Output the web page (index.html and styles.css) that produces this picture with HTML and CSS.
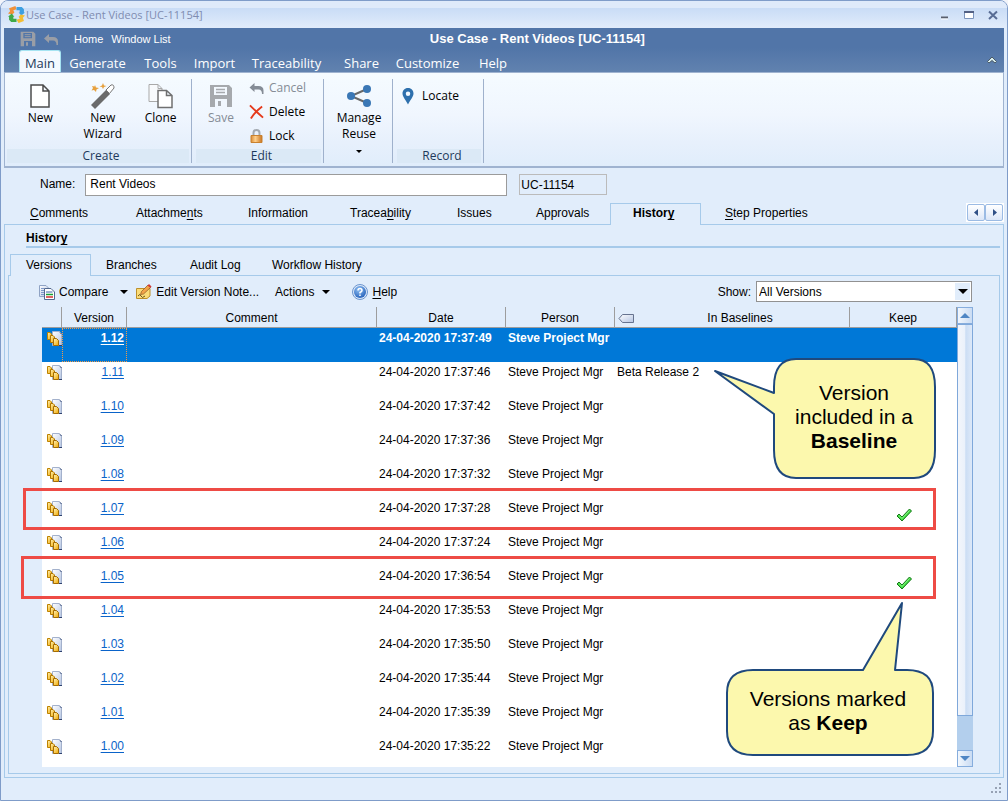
FILE: index.html
```html
<!DOCTYPE html>
<html lang="en">
<head>
<meta charset="utf-8">
<title>Use Case - Rent Videos [UC-11154]</title>
<link rel="stylesheet" href="styles.css">
</head>
<body>
<svg class="sprite" aria-hidden="true">
  <defs>
    <linearGradient id="gold" x1="0" y1="0" x2="1" y2="1"><stop offset="0" stop-color="#fff3b8"/><stop offset="1" stop-color="#f2a900"/></linearGradient>
    <linearGradient id="paper" x1="0" y1="0" x2="1" y2="1"><stop offset="0" stop-color="#fff"/><stop offset="1" stop-color="#b4c4e2"/></linearGradient>
    <linearGradient id="brass" x1="0" y1="0" x2="1" y2="0"><stop offset="0" stop-color="#d98a35"/><stop offset=".4" stop-color="#ffcf8a"/><stop offset="1" stop-color="#c87420"/></linearGradient>
    <radialGradient id="ball" cx=".4" cy=".3" r=".8"><stop offset="0" stop-color="#8fc0f4"/><stop offset="1" stop-color="#1c58b4"/></radialGradient>
    <symbol id="copies" viewBox="0 0 16 16">
      <path d="M5.500 .5H12.500L14.500 2.500V14.500H5.500z" fill="url(#paper)" stroke="#a3b1cc"/>
      <path d="M13 1.500L14.500 3M12 14.500H15" fill="none" stroke="#2f426f"/>
      <path d="M.5 1.500H3L4.500 3V8.500H.5z" fill="url(#gold)" stroke="#bd8200"/>
      <path d="M3.500 4.500H6L7.500 6V11.500H3.500z" fill="url(#gold)" stroke="#b07600"/>
      <path d="M6.500 7.500H9.500L11.500 9.500V14.500H6.500z" fill="url(#gold)" stroke="#a66c00"/>
    </symbol>
    <symbol id="tick" viewBox="0 0 16 14">
      <path d="M1 8L3 6L6 9L13.500 1L15.500 3L6 13z" fill="#3fdc3f" stroke="#17791a" stroke-width="1"/>
      <path d="M3 7.500L6 10.500L13.500 2.500" fill="none" stroke="#8cf58a"/>
    </symbol>
    <symbol id="floppy" viewBox="0 0 24 24">
      <path fill-rule="evenodd" fill="currentColor" d="M1 1H20L23 4V23H1zM5 3V11H18V3zM6 15V23H18V15zM9 17H12V22H9z"/>
      <path d="M7 5.500H16M7 8.500H16" stroke="currentColor" stroke-width="1.500"/>
    </symbol>
    <symbol id="undo" viewBox="0 0 14 11">
      <path fill="currentColor" d="M0 4.500L5 0V3H9Q14 3 14 7.500V11H12.500Q12.500 6.500 9 6.500H5V9z"/>
    </symbol>
    <symbol id="down" viewBox="0 0 8 4"><path d="M0 0H8L4 4z" fill="currentColor"/></symbol>
  </defs>
</svg>

<div class="window">
  <header class="titlebar">
    <svg class="logo" viewBox="0 0 16 16" aria-hidden="true">
      <path d="M0 7L2 5L1 2L7 0L8 3L5 4L6 6L4 8z" fill="#f09038"/>
      <path d="M8 1L13 1L15 3V6H16L12.500 9L10 6H11V4H8z" fill="#3d9fe0"/>
      <path d="M16 9L14 11L15 14L10 16L8 13L11 12L10 10L12 8z" fill="#f4bd32"/>
      <path d="M8 15L3 15L1 13V10H0L3.500 7L6 10H5V12H8z" fill="#3faa48"/>
    </svg>
    <span class="title">Use Case - Rent Videos [UC-11154]</span>
    <div class="win-buttons">
      <button aria-label="Minimize"><svg viewBox="0 0 10 10"><path d="M1 7.500H8" stroke="#595f6d" stroke-width="2"/><path d="M1 9H8" stroke="#fff"/></svg></button>
      <button aria-label="Maximize"><svg viewBox="0 0 10 10"><path d="M.5 2.500H9.500V8.500H.5z" fill="#fff" stroke="#7c95bd"/><path d="M0 2H10" stroke="#536184" stroke-width="2"/></svg></button>
      <button aria-label="Close"><svg viewBox="0 0 10 10"><path d="M1 1.500L9 9M9 1.500L1 9" stroke="#586c94" stroke-width="2"/></svg></button>
    </div>
  </header>

  <div class="appbar">
    <div class="quick">
      <button aria-label="Save" class="gray"><svg width="16" height="16"><use href="#floppy"/></svg></button>
      <button aria-label="Undo" class="gray"><svg width="14" height="11"><use href="#undo"/></svg></button>
      <a href="#">Home</a>
      <a href="#">Window List</a>
      <h1>Use Case - Rent Videos [UC-11154]</h1>
    </div>
    <nav class="menu">
      <button class="active">Main</button><button>Generate</button><button>Tools</button><button>Import</button><button>Traceability</button><button>Share</button><button>Customize</button><button>Help</button>
      <button class="collapse" aria-label="Collapse ribbon"><svg width="10" height="8" viewBox="0 0 10 8"><path d="M.5 5.500L5 1L9.500 5.500L8 7L5 4.500L2 7z" fill="#d8eeee" stroke="#4b5a66"/></svg></button>
    </nav>
  </div>

  <div class="ribbon">
    <section class="group create">
      <div class="tools">
        <button class="big">
          <svg width="20" height="24" viewBox="0 0 20 24"><path d="M1 1H13L19 7V23H1zM13 1V7H19" fill="#fff" stroke="#4c4c4c" stroke-width="1.500"/></svg>
          New</button>
        <button class="big">
          <svg width="26" height="26" viewBox="0 0 26 26"><path d="M1 22L16 7L20 11L5 26z" fill="#6b6b6b"/><path d="M16 7L21 2Q24 1 24 5L19.500 10.500z" fill="#fff" stroke="#777"/><path d="M5 2L6 4.500L9 5L6.500 6.500L6 9L4 7L1.500 7.500L3 5L2 3L4.500 3.500zM13 0L14 2.500L16.500 3L14 4L13 6L12 4L9.500 3.500L12 2.500z" fill="#e7a13e"/></svg>
          New<br>Wizard</button>
        <button class="big">
          <svg width="26" height="25" viewBox="0 0 26 25"><path d="M1 1H10L14 5V18H1zM10 1V5H14" fill="#f8fafc" stroke="#a9a9a9"/><path d="M10 7H18.500L24 12V24H10zM18.500 7V12H24" fill="#fff" stroke="#707070" stroke-width="1.500"/></svg>
          Clone</button>
      </div>
      <h2>Create</h2>
    </section>
    <section class="group edit">
      <div class="tools">
        <button class="big" disabled>
          <svg width="24" height="24" class="save"><use href="#floppy"/></svg>
          Save</button>
        <div class="stack">
          <button disabled><svg width="14" height="11"><use href="#undo"/></svg>Cancel</button>
          <button><svg width="16" height="16" viewBox="0 0 16 16"><path d="M1 1Q6 6 15 14M14 2Q6 8 2 15" fill="none" stroke="#e53a1c" stroke-width="2"/></svg>Delete</button>
          <button><svg width="14" height="15" viewBox="0 0 14 15"><path d="M4 7V4Q4 1 7 1T10 4V7" fill="none" stroke="#a3a9b0" stroke-width="2"/><path d="M1.500 6.500H12.500V13.500H1.500z" fill="url(#brass)" stroke="#c9812f"/></svg>Lock</button>
        </div>
      </div>
      <h2>Edit</h2>
    </section>
    <section class="group reuse">
      <button class="big">
        <svg width="26" height="24" viewBox="0 0 26 24"><path d="M21 5L5 12L21 19" fill="none" stroke="#686868" stroke-width="2"/><circle cx="21" cy="5" r="4" fill="#3a77b5"/><circle cx="5" cy="12" r="4" fill="#3a77b5"/><circle cx="21" cy="19" r="4" fill="#3a77b5"/></svg>
        Manage<br>Reuse
        <svg class="caret" width="6" height="3"><use href="#down"/></svg></button>
    </section>
    <section class="group record">
      <div class="tools stack">
        <button><svg width="12" height="17" viewBox="0 0 12 17"><path fill-rule="evenodd" fill="#2e70ad" d="M6 0C2.500 0 .5 2.500 .5 5.500C.5 9 4 12 6 16.500C8 12 11.500 9 11.500 5.500C11.500 2.500 9.500 0 6 0zM6 3.500A2.200 2.200 0 1 1 6 8A2.200 2.200 0 1 1 6 3.500z"/></svg>Locate</button>
      </div>
      <h2>Record</h2>
    </section>
  </div>

  <form class="identity">
    <label for="name">Name:</label>
    <input id="name" type="text" value="Rent Videos">
    <input id="code" type="text" value="UC-11154" readonly aria-label="Identifier">
  </form>

  <nav class="tabs">
    <button><u>C</u>omments</button><button>Attachme<u>n</u>ts</button><button>Information</button><button>Tracea<u>b</u>ility</button><button>Issues</button><button>Approvals</button><button class="active">Histor<u>y</u></button><button><u>S</u>tep Properties</button>
    <div class="tab-scroll">
      <button aria-label="Previous tabs"><svg width="5" height="7" viewBox="0 0 5 7"><path d="M4 0V7L0 3.500z" fill="#2f4f86"/></svg></button>
      <button aria-label="Next tabs"><svg width="5" height="7" viewBox="0 0 5 7"><path d="M1 0V7L5 3.500z" fill="#2f4f86"/></svg></button>
    </div>
  </nav>

  <main class="panel">
    <h2 class="heading">Histor<u>y</u></h2>
    <nav class="subtabs">
      <button class="active">Versions</button><button>Branches</button><button>Audit Log</button><button>Workflow History</button>
    </nav>
    <div class="subpanel">
      <div class="toolbar">
        <button class="compare"><svg width="16" height="16" viewBox="0 0 16 16"><path d="M.5 1.500H7L9.500 4V12.500H.5z" fill="url(#paper)" stroke="#8fa3c4"/><path d="M2 4.500H5M2 6.500H5M2 8.500H5M2 10.500H5" stroke="#7d98c9"/><path d="M5.500 4.500H12L15.500 8V15.500H5.500z" fill="#fff" stroke="#53688f"/><path d="M7 8H13.500" stroke="#3c63a8"/><path d="M7 10.500H14" stroke="#17a032" stroke-width="1.500"/><path d="M7 13H14" stroke="#d63030" stroke-width="1.500"/></svg>Compare<svg class="caret" width="8" height="4"><use href="#down"/></svg></button>
        <button class="note"><svg width="16" height="16" viewBox="0 0 16 16"><path d="M.5 4.500H14V12L11 14.500H.5z" fill="#fbdc78" stroke="#bc902b"/><path d="M2 12Q4 9 5 12T9 12" fill="none" stroke="#6b5520"/><path d="M4.500 10.500L5.500 7.500L12 1L14.500 3.500L7.500 10z" fill="#f3a44a" stroke="#8b5520" stroke-width=".7"/><path d="M11.500 1.500L13 0L15.500 2.500L14.500 4z" fill="#cf3939"/></svg>Edit Version Note...</button>
        <button class="actions">Actions<svg class="caret" width="8" height="4"><use href="#down"/></svg></button>
        <button><svg width="16" height="16" viewBox="0 0 16 16"><circle cx="8" cy="8" r="7.500" fill="#dbe8f8" stroke="#6c95cf"/><circle cx="8" cy="8" r="6" fill="url(#ball)"/><path d="M6 6.500Q6 4.500 8 4.500T10 6.500Q10 7.500 8 8.500V9.500M8 10.500V12" fill="none" stroke="#fff" stroke-width="1.500"/></svg><span><u>H</u>elp</span></button>
        <div class="filter">
          <label for="show">Show:</label>
          <div class="select"><select id="show"><option>All Versions</option></select><span class="drop"><svg width="10" height="5" viewBox="0 0 8 4"><use href="#down"/></svg></span></div>
        </div>
      </div>

      <div class="list">
        <div class="scroller">
          <table>
            <colgroup><col class="c-icon"><col class="c-version"><col><col class="c-date"><col class="c-person"><col class="c-base"><col class="c-keep"></colgroup>
            <thead>
              <tr><th aria-label="Type"></th><th>Version</th><th>Comment</th><th>Date</th><th>Person</th><th class="tagged"><svg class="tag" width="16" height="9" viewBox="0 0 16 9"><path d="M1 4.500L4.500 .5H15.500V8.500H4.500z" fill="url(#paper)" stroke="#66738f"/></svg>In Baselines</th><th>Keep</th></tr>
            </thead>
            <tbody>
              <tr class="selected"><td><svg width="16" height="16"><use href="#copies"/></svg></td><td class="focus"><a href="#">1.12</a></td><td></td><td>24-04-2020 17:37:49</td><td>Steve Project Mgr</td><td></td><td></td></tr>
              <tr><td><svg width="16" height="16"><use href="#copies"/></svg></td><td><a href="#">1.11</a></td><td></td><td>24-04-2020 17:37:46</td><td>Steve Project Mgr</td><td>Beta Release 2</td><td></td></tr>
              <tr><td><svg width="16" height="16"><use href="#copies"/></svg></td><td><a href="#">1.10</a></td><td></td><td>24-04-2020 17:37:42</td><td>Steve Project Mgr</td><td></td><td></td></tr>
              <tr><td><svg width="16" height="16"><use href="#copies"/></svg></td><td><a href="#">1.09</a></td><td></td><td>24-04-2020 17:37:36</td><td>Steve Project Mgr</td><td></td><td></td></tr>
              <tr><td><svg width="16" height="16"><use href="#copies"/></svg></td><td><a href="#">1.08</a></td><td></td><td>24-04-2020 17:37:32</td><td>Steve Project Mgr</td><td></td><td></td></tr>
              <tr><td><svg width="16" height="16"><use href="#copies"/></svg></td><td><a href="#">1.07</a></td><td></td><td>24-04-2020 17:37:28</td><td>Steve Project Mgr</td><td></td><td><svg width="16" height="14" role="img" aria-label="Kept"><use href="#tick"/></svg></td></tr>
              <tr><td><svg width="16" height="16"><use href="#copies"/></svg></td><td><a href="#">1.06</a></td><td></td><td>24-04-2020 17:37:24</td><td>Steve Project Mgr</td><td></td><td></td></tr>
              <tr><td><svg width="16" height="16"><use href="#copies"/></svg></td><td><a href="#">1.05</a></td><td></td><td>24-04-2020 17:36:54</td><td>Steve Project Mgr</td><td></td><td><svg width="16" height="14" role="img" aria-label="Kept"><use href="#tick"/></svg></td></tr>
              <tr><td><svg width="16" height="16"><use href="#copies"/></svg></td><td><a href="#">1.04</a></td><td></td><td>24-04-2020 17:35:53</td><td>Steve Project Mgr</td><td></td><td></td></tr>
              <tr><td><svg width="16" height="16"><use href="#copies"/></svg></td><td><a href="#">1.03</a></td><td></td><td>24-04-2020 17:35:50</td><td>Steve Project Mgr</td><td></td><td></td></tr>
              <tr><td><svg width="16" height="16"><use href="#copies"/></svg></td><td><a href="#">1.02</a></td><td></td><td>24-04-2020 17:35:44</td><td>Steve Project Mgr</td><td></td><td></td></tr>
              <tr><td><svg width="16" height="16"><use href="#copies"/></svg></td><td><a href="#">1.01</a></td><td></td><td>24-04-2020 17:35:39</td><td>Steve Project Mgr</td><td></td><td></td></tr>
              <tr class="last"><td><svg width="16" height="16"><use href="#copies"/></svg></td><td><a href="#">1.00</a></td><td></td><td>24-04-2020 17:35:22</td><td>Steve Project Mgr</td><td></td><td></td></tr>
            </tbody>
          </table>
        </div>
        <div class="scrollbar">
          <button aria-label="Scroll up"><svg width="10" height="5" viewBox="0 0 10 5"><path d="M0 5H10L5 0z" fill="#4f86c4"/></svg></button>
          <div class="track"><div class="thumb"></div></div>
          <button aria-label="Scroll down"><svg width="10" height="5" viewBox="0 0 10 5"><path d="M0 0H10L5 5z" fill="#4f86c4"/></svg></button>
        </div>

        <div class="mark mark-a"></div>
        <div class="mark mark-b"></div>
        <div class="callout baseline">
          <svg width="224" height="124" viewBox="0 0 224 124"><path d="M60 36V30Q60 2 82 2H200Q221 2 221 30V93Q221 121 200 121H82Q60 121 60 93V57L1 14z"/></svg>
          <p>Version<br>included in a<br><b>Baseline</b></p>
        </div>
        <div class="callout keep">
          <svg width="210" height="156" viewBox="0 0 210 156"><path d="M138 69H28Q2 69 2 92V130Q2 154 28 154H182Q208 154 208 130V92Q208 69 182 69H170L177 2z"/></svg>
          <p>Versions marked<br>as <b>Keep</b></p>
        </div>
      </div>
    </div>
  </main>

  <footer class="status"><svg width="12" height="12" viewBox="0 0 12 12"><path d="M9 1h2v2H9zM5 5h2v2H5zM9 5h2v2H9zM1 9h2v2H1zM5 9h2v2H5zM9 9h2v2H9z" fill="#97a2b4"/></svg></footer>
</div>
</body>
</html>
```
FILE: styles.css
```css
* { box-sizing: border-box; }

body {
  margin: 0;
  background: #f2f4fa;
  color: #000;
  font: 12px/16px "Liberation Sans", Arial, sans-serif;
}

button {
  border: 0;
  padding: 0;
  background: none;
  color: inherit;
  font: inherit;
  white-space: nowrap;
}

svg { display: block; flex: none; }
h1, h2, p { margin: 0; }
u { text-underline-offset: 2px; }
.sprite { position: absolute; width: 0; height: 0; }

.window {
  display: flex;
  flex-direction: column;
  min-height: 100vh;
  padding: 0 3px;
  border: 1px solid #7f9cc9;
  border-radius: 8px 8px 0 0;
  background: #e1edfb;
}

/* Title bar */
.titlebar {
  display: flex;
  align-items: center;
  height: 27px;
  margin: 0 -3px;
  padding-left: 7px;
  border-radius: 7px 7px 0 0;
  background: linear-gradient(#dfeafa 0, #dfeafa 7px, #c9dcf6 7px, #e1ecfb 100%);
  color: #7f8cb0;
  font-family: "Open Sans", "Noto Sans", sans-serif;
  font-size: 11px;
}
.logo { width: 17px; height: 17px; }
.title { margin-left: 1px; }
.win-buttons { display: flex; gap: 2px; margin-left: auto; padding-right: 3px; }
.win-buttons button { display: grid; place-items: center; width: 22px; height: 16px; }
.win-buttons svg { width: 10px; height: 10px; }

/* Blue application bar */
.appbar {
  background: linear-gradient(#5175a8 0, #5175a8 45%, #6182af 100%);
  color: #fff;
}
.quick { display: flex; align-items: center; height: 22px; padding-left: 16px; font-size: 11px; }
.quick .gray { color: #9a9ea6; margin-right: 8px; }
.quick a { color: #fff; text-decoration: none; margin-left: 8px; }
.quick .gray + a { margin-left: 8px; }
.quick h1 { flex: 1; padding-right: 100px; font-size: 13px; text-align: center; }

.menu {
  display: grid;
  grid-template-columns: 42px 73px 53px 55px 89px 61px 71px 60px 1fr;
  height: 22px;
  padding-left: 15px;
  font: 13px/22px "Open Sans", "Noto Sans", sans-serif;
}
.menu button { padding-top: 2px; }
.menu .active {
  padding-top: 0;
  border: 1px solid #a6e4f2;
  border-bottom: 0;
  border-radius: 3px 3px 0 0;
  background: #f4f9ff;
  color: #1e395b;
}
.menu .collapse { justify-self: end; padding: 0 7px 4px 0; }

/* Ribbon */
.ribbon {
  display: flex;
  height: 96px;
  padding: 6px 2px 3px;
  border: 1px solid #9fb3d0;
  border-bottom-width: 2px;
  background: linear-gradient(#f5fbff, #f0f6fe 45%, #e7f0fc 75%, #e0edfb);
  font-family: "Open Sans", "Noto Sans", sans-serif;
}
.group {
  display: flex;
  flex-direction: column;
  margin-right: 4px;
  padding-right: 2px;
  border-right: 1px solid #9fb1cc;
}
.group h2 {
  padding-left: 6px;
  background: #dbe9f6;
  color: #1e395b;
  font-size: 12px;
  font-weight: 400;
  line-height: 14px;
  text-align: center;
}
.group .tools { display: flex; flex: 1; }
.create { width: 185px; }
.edit { width: 128px; }
.reuse { width: 65px; align-items: center; }
.record { width: 87px; }
.big {
  display: flex;
  flex-direction: column;
  align-items: center;
  align-self: flex-start;
  width: 62px;
  padding-top: 4px;
}
.big > svg:first-child { height: 26px; margin-bottom: 1px; }
.create .big { width: 60px; }
.create .big:first-child { width: 68px; }
.create .big:nth-child(3) { width: 58px; }
.reuse .caret { margin-top: 8px; }
.edit .big { width: 50px; }
button:disabled { color: #858c96; }
.save { color: #a6a9ad; }
.stack { display: flex; flex-direction: column; gap: 8px; padding: 1px 0 0 3px; }
.stack button { display: flex; align-items: center; gap: 5px; height: 16px; }
.stack svg { width: 15px; }
.record .stack { padding: 9px 0 0 5px; }
.record .stack svg { width: 12px; margin-right: 3px; }

/* Identity fields */
.identity { display: flex; align-items: flex-start; gap: 8px; padding: 6px 0 7px 36px; }
.identity label { line-height: 20px; margin-right: 2px; }
.identity input {
  height: 22px;
  padding: 0 4px 2px;
  border: 1px solid #9b9b9b;
  background: #fff;
  font: inherit;
}
#name { width: 422px; }
#code { width: 88px; height: 21px; margin-left: 4px; padding: 0 1px; border-color: #bbb; background: #e1edfb; }

/* Record tabs */
.tabs {
  display: grid;
  grid-template-columns: 106px 112px 102px 107px 79px 98px 91px 120px 1fr;
  height: 22px;
  margin-bottom: -1px;
  padding-left: 2px;
}
.tabs > button { padding: 0 0 2px 24px; text-align: left; }
.tabs .active { border: 1px solid #a6caea; border-bottom: 0; background: #e1edfb; padding: 0 0 3px 22px; font-weight: 700; z-index: 1; }
.tab-scroll { display: flex; justify-self: end; height: 19px; background: #fff; padding: 1px; }
.tab-scroll button { display: grid; place-items: center; width: 18px; border: 1px solid #9bbbe4; border-radius: 2px; background: linear-gradient(#fff, #dbe6f8); }

.panel {
  display: flex;
  flex-direction: column;
  flex: 1;
  padding: 0 3px 3px;
  border: 1px solid #a6caea;
}
.heading { margin-left: 18px; padding: 5px 0 0; border-bottom: 2px solid #a6caea; font-size: 12px; line-height: 16px; }
.subtabs { display: grid; grid-template-columns: 81px 84px 82px 120px; height: 22px; margin: 6px 0 -1px; padding-left: 2px; }
.subtabs button { padding-left: 15px; text-align: left; }
.subtabs .active { border: 1px solid #a6caea; border-bottom: 0; background: #e1edfb; padding-bottom: 2px; z-index: 1; }
.subpanel {
  display: flex;
  flex-direction: column;
  flex: 1;
  padding: 0 26px 6px 33px;
  border: 1px solid #a6caea;
}

/* Toolbar */
.toolbar { display: flex; align-items: center; height: 31px; margin-left: -3px; }
.toolbar button { display: flex; align-items: center; gap: 4px; margin-right: 22px; }
.toolbar .caret { margin-left: 4px; }
.toolbar .compare { margin-right: 8px; }
.toolbar .compare .caret { margin-left: 8px; }
.toolbar .note { margin-right: 16px; }
.filter { display: flex; align-items: center; gap: 5px; margin-left: auto; margin-right: 1px; }
.select { position: relative; width: 216px; }
.select select { appearance: none; display: block; width: 100%; height: 21px; padding: 0 2px; border: 1px solid #919191; border-radius: 0; background: #fff; color: #000; font: inherit; }
.drop { position: absolute; top: 2px; right: 2px; bottom: 2px; display: grid; place-items: center; width: 15px; background: #e1edfb; pointer-events: none; }

/* Version list */
.list { position: relative; display: flex; flex: 1; }
.scroller { flex: 1; background: #fff; }
table { width: 100%; border-collapse: separate; border-spacing: 0; table-layout: fixed; }
.c-icon { width: 20px; }
.c-version { width: 65px; }
.c-date { width: 129px; }
.c-person { width: 109px; }
.c-base { width: 235px; }
.c-keep { width: 107px; }
th { height: 21px; padding: 1px 0 0; border-right: 1px solid #9d9d9d; border-bottom: 1px solid #9d9d9d; background: #e1edfb; font-weight: 400; }
.tagged { position: relative; padding-left: 16px; }
.tag { position: absolute; left: 3px; top: 7px; }
td { height: 34px; padding: 2px; vertical-align: top; white-space: nowrap; }
.last td { height: 30px; }
td:first-child { padding: 3px 0 0 5px; overflow: visible; }
td:nth-child(2) { padding-right: 3px; text-align: right; }
td:last-child svg { margin: 8px auto 0; }
td a { color: #0a63c9; text-underline-offset: 2px; }
.selected td { background: #0078d7; color: #fff; font-weight: 700; }
.selected a { color: #fff; }
.selected .focus { padding: 1px 2px; border: 1px dotted #f39a45; }

.scrollbar { display: flex; flex-direction: column; width: 16px; background: #b3cfed; }
.scrollbar button { display: grid; place-items: center; height: 17px; border: 1px solid #86addd; background: linear-gradient(90deg, #f2f7fd, #cadcf3); }
.track { flex: 1; }
.thumb { height: 92%; border: 1px solid #7fa8da; background: linear-gradient(90deg, #f3f6fb 0, #eaf1fb 50%, #cbddf4 55%, #dde9f9 100%); }

/* Annotations over the list */
.mark { position: absolute; right: 37px; border: 3px solid #ee4b45; }
.mark-a { left: -19px; top: 181px; height: 42px; }
.mark-b { left: -21px; top: 249px; height: 43px; }
.callout { position: absolute; color: #000; font-size: 21px; line-height: 24px; text-align: center; }
.callout path { fill: #fcf8ad; stroke: #1f497d; stroke-width: 2px; stroke-linejoin: round; }
.callout p { position: absolute; right: 4px; }
.baseline { top: 50px; right: 35px; }
.baseline p { top: 24px; left: 60px; }
.keep { top: 294px; right: 38px; }
.keep p { top: 86px; left: 0; }

.status { display: flex; align-items: flex-end; justify-content: flex-end; height: 22px; padding: 0 2px 6px; }
```
